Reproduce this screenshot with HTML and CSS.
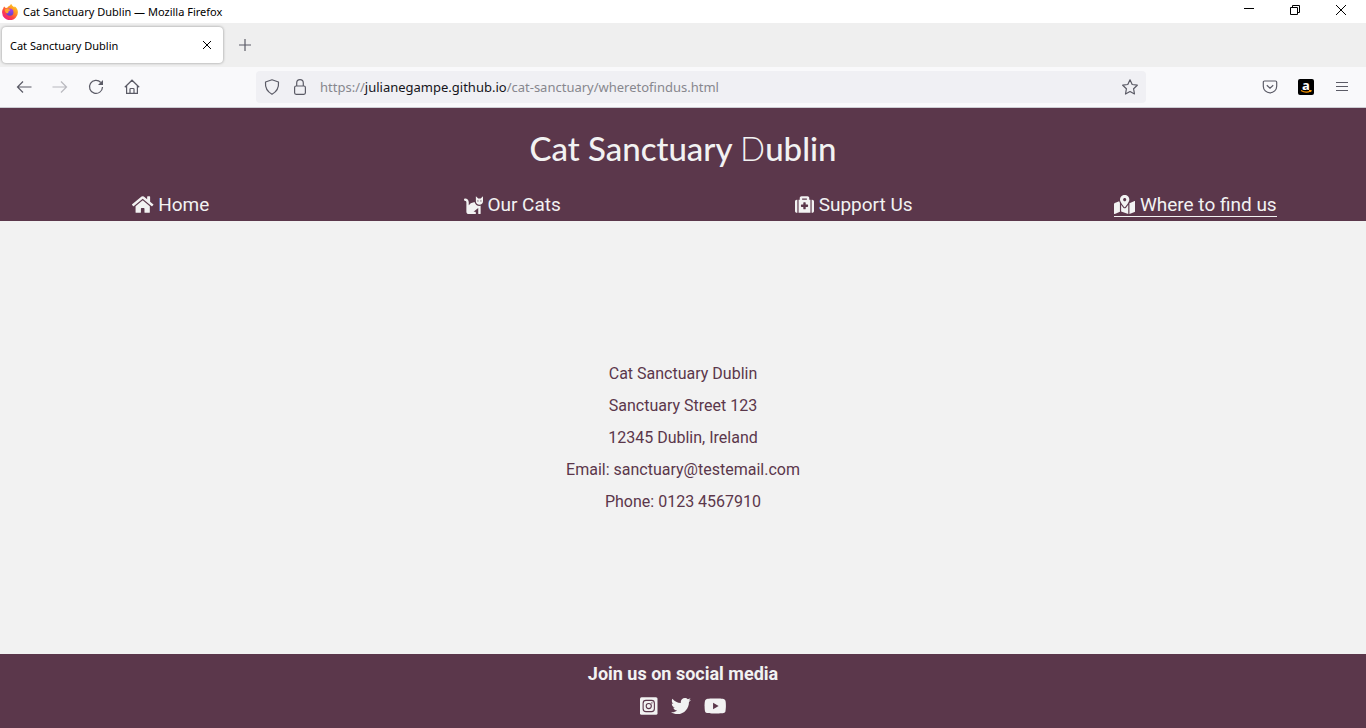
FILE: index.html
```html
<!DOCTYPE html>
<html lang="en">
<head>
<meta charset="utf-8">
<title>Cat Sanctuary Dublin</title>
<link rel="stylesheet" href="styles.css">
</head>
<body>
<div class="titlebar">
  <svg class="i16" viewBox="0 0 16 16">
    <defs>
      <linearGradient id="flame" x1="1" y1="0" x2="0.2" y2="1"><stop offset="0" stop-color="#ffe226"/><stop offset=".4" stop-color="#ff9422"/><stop offset=".7" stop-color="#ff4045"/><stop offset="1" stop-color="#e91e8c"/></linearGradient>
      <linearGradient id="globe" x1="0" y1="0" x2="0" y2="1"><stop offset="0" stop-color="#b43cf0"/><stop offset="1" stop-color="#5a46c8"/></linearGradient>
    </defs>
    <path fill="url(#flame)" d="M2.2 2.6 3.7 4l1.6-.2C6.2 2.4 7.400 1.800 8 1.600 8 1 8.700.3 9.400 0c.2 1.500 1.600 2 2.800 3.200.4-.2.5-.6.4-1 2.200 1.500 3.300 3.700 3.300 6a7.900 7.900 0 0 1-15.800.2c0-1.800.5-3.200 1.300-4.100 0-.7.300-1.300.8-1.700z"/>
    <circle cx="7.800" cy="8.200" r="3.600" fill="url(#globe)"/>
    <path fill="#ffa32b" d="M2.700 5.700c1.200-1.200 3-1.200 4.100-.5l1.500.5c-.2.900-1.300 1-1.700 1.600-.3.600.2 1.600-.9 1.900-1.600.4-2.800-1.500-3-3.500z"/>
  </svg>
  <span class="window-title">Cat Sanctuary Dublin — Mozilla Firefox</span>
  <div class="window-buttons">
    <button aria-label="Minimize"><svg class="i12" viewBox="0 0 12 12"><path d="M1 4.500h10"/></svg></button>
    <button aria-label="Restore"><svg class="i12" viewBox="0 0 12 12"><path d="M1.500 3.500h7v7h-7zM3.500 3.500v-2h7v7h-2"/></svg></button>
    <button aria-label="Close"><svg class="i12" viewBox="0 0 12 12"><path d="m1 1 10 10M11 1 1 11"/></svg></button>
  </div>
</div>
<div class="tabs">
  <div class="tab"><span>Cat Sanctuary Dublin</span><button aria-label="Close tab"><svg class="i12" viewBox="0 0 12 12"><path d="m2 2 8 8M10 2l-8 8"/></svg></button></div>
  <button class="new-tab" aria-label="New tab"><svg class="i12" viewBox="0 0 12 12"><path d="M6 0v12M0 6h12"/></svg></button>
</div>
<div class="toolbar">
  <div class="tools">
    <button aria-label="Back"><svg class="i16" viewBox="0 0 16 16"><path d="M15.500 8H1.500M7 2.500 1.500 8 7 13.500"/></svg></button>
    <button aria-label="Forward" class="dim"><svg class="i16" viewBox="0 0 16 16"><path d="M.5 8h14M9 2.500 14.500 8 9 13.500"/></svg></button>
    <button aria-label="Reload"><svg class="i16" viewBox="0 0 16 16"><path d="M12.800 3.500a6.500 6.500 0 1 0 1.700 4.500"/><path class="solid" d="M15 1v5H10z"/></svg></button>
    <button aria-label="Home page"><svg class="i16" viewBox="0 0 16 16"><path d="M.8 8.200 8 1.200l7.200 7M2.600 7v7.400h10.800V7M6 14.300v-4.100q0-.7.700-.7h2.600q.7 0 .7.700v4.100"/></svg></button>
  </div>
  <div class="urlbar">
    <svg class="i16" viewBox="0 0 16 16"><path d="M8 .8 14.500 3C15 8.500 13 12.500 8 15.300 3 12.500 1 8.500 1.500 3z" stroke-linejoin="round"/></svg>
    <svg class="i16" viewBox="0 0 16 16"><rect x="2.600" y="7" width="10.800" height="8.300" rx="1.500"/><path d="M4.700 7V4a3.300 3.300 0 0 1 6.600 0v3"/></svg>
    <a class="url" href="#">https://<b>julianegampe.github.io</b>/cat-sanctuary/wheretofindus.html</a>
    <button aria-label="Bookmark this page"><svg class="i16" viewBox="0 0 16 16"><path stroke-linejoin="round" d="m8 .8 2.200 4.700 5.100.7-3.700 3.600.9 5.200L8 12.500 3.500 15l.9-5.200L.7 6.200l5.100-.7z"/></svg></button>
  </div>
  <div class="tools extras">
    <button aria-label="Save to Pocket"><svg class="i16" viewBox="0 0 16 16"><path d="M2.500 2h11q1.200 0 1.200 1.200v4a6.700 6.700 0 0 1-13.400 0v-4Q1.300 2 2.500 2zM4.800 6.200 8 9.200l3.200-3"/></svg></button>
    <button class="amazon" aria-label="Amazon"><span>a</span><svg viewBox="0 0 16 4"><path d="M3 .5q5 3 9.500.5M11 .5h2l-.5 1.500"/></svg></button>
    <button aria-label="Menu"><svg class="i16" viewBox="0 0 16 16"><path d="M2 3.500h12M2 7.500h12M2 11.500h12"/></svg></button>
  </div>
</div>
<header class="site-header">
  <h1>Cat Sanctuary <span>D</span>ublin</h1>
  <nav>
    <a href="#"><svg viewBox="0 0 576 512"><path d="M280.370 148.260L96 300.110V464a16 16 0 0 0 16 16l112.060-.29a16 16 0 0 0 15.920-16V368a16 16 0 0 1 16-16h64a16 16 0 0 1 16 16v95.640a16 16 0 0 0 16 16.050L464 480a16 16 0 0 0 16-16V300L295.670 148.260a12.190 12.190 0 0 0-15.300 0zM571.600 251.470L488 182.560V44.050a12 12 0 0 0-12-12h-56a12 12 0 0 0-12 12v72.610L318.470 43a48 48 0 0 0-61 0L4.340 251.470a12 12 0 0 0-1.600 16.900l25.500 31A12 12 0 0 0 45.150 301l235.220-193.740a12.190 12.190 0 0 1 15.300 0L530.900 301a12 12 0 0 0 16.900-1.600l25.500-31a12 12 0 0 0-1.700-16.930z"/></svg> Home</a>
    <a href="#"><svg viewBox="0 0 512 512"><path d="M290.590 192c-20.180 0-106.820 1.980-162.590 85.950V192c0-52.940-43.060-96-96-96-17.670 0-32 14.330-32 32s14.330 32 32 32c17.640 0 32 14.360 32 32v256c0 35.300 28.700 64 64 64h176c8.840 0 16-7.160 16-16v-16c0-17.670-14.330-32-32-32h-32l128-96v144c0 8.840 7.160 16 16 16h32c8.840 0 16-7.160 16-16V289.860c-10.290 2.670-20.890 4.540-32 4.540-61.810 0-113.520-44.050-125.410-102.400zM448 96h-64l-64-64v134.400c0 53.020 42.980 96 96 96s96-42.980 96-96V32l-64 64zm-72 80c-8.840 0-16-7.160-16-16s7.160-16 16-16 16 7.160 16 16-7.160 16-16 16zm80 0c-8.840 0-16-7.160-16-16s7.160-16 16-16 16 7.160 16 16-7.160 16-16 16z"/></svg> Our Cats</a>
    <a href="#"><svg viewBox="0 0 512 512"><path d="M96 480h320V128h-32V80c0-26.510-21.490-48-48-48H176c-26.510 0-48 21.490-48 48v48H96v352zm96-384h128v32H192V96zm320 80v256c0 26.510-21.490 48-48 48h-16V128h16c26.510 0 48 21.490 48 48zM64 480H48c-26.510 0-48-21.490-48-48V176c0-26.510 21.490-48 48-48h16v352zm288-208v32c0 8.840-7.160 16-16 16h-48v48c0 8.840-7.160 16-16 16h-32c-8.840 0-16-7.160-16-16v-48h-48c-8.840 0-16-7.160-16-16v-32c0-8.840 7.160-16 16-16h48v-48c0-8.840 7.160-16 16-16h32c8.840 0 16 7.160 16 16v48h48c8.840 0 16 7.160 16 16z"/></svg> Support Us</a>
    <a href="#" class="active" aria-current="page"><svg viewBox="0 0 576 512"><path d="M288 0c-69.590 0-126 56.410-126 126 0 56.260 82.350 158.800 113.900 196.020 6.390 7.540 17.820 7.540 24.200 0C331.650 284.800 414 182.260 414 126 414 56.410 357.590 0 288 0zm0 168c-23.200 0-42-18.800-42-42s18.800-42 42-42 42 18.800 42 42-18.800 42-42 42zM20.120 215.950A32 32 0 0 0 0 245.660v250.320c0 11.320 11.430 19.060 21.940 14.860L160 448V214.920c-8.840-15.980-16.070-31.540-21.250-46.420L20.120 215.950zM288 359.670c-14.070 0-27.380-6.180-36.510-16.960-19.660-23.200-40.570-49.620-59.490-76.720v182l192 64V266c-18.920 27.090-39.820 53.520-59.490 76.720-9.130 10.770-22.440 16.950-36.510 16.950zm266.060-198.510L416 224v288l139.880-55.950A32 32 0 0 0 576 426.340V176.020c0-11.320-11.430-19.060-21.940-14.860z"/></svg> Where to find us</a>
  </nav>
</header>
<main>
  <address>
    <p>Cat Sanctuary Dublin</p>
    <p>Sanctuary Street 123</p>
    <p>12345 Dublin, Ireland</p>
    <p>Email: sanctuary@testemail.com</p>
    <p>Phone: 0123 4567910</p>
  </address>
</main>
<footer>
  <h2>Join us on social media</h2>
  <div class="social">
    <a href="#" aria-label="Instagram"><svg viewBox="0 0 448 512"><rect y="32" width="448" height="448" rx="40"/><rect class="ring" x="80" y="112" width="288" height="288" rx="72"/><circle class="ring" cx="224" cy="256" r="66"/><circle class="dot" cx="304" cy="176" r="18"/></svg></a>
    <a href="#" aria-label="Twitter"><svg viewBox="0 0 512 512"><path d="M459.370 151.716c.325 4.548.325 9.097.325 13.645 0 138.720-105.583 298.558-298.558 298.558-59.452 0-114.680-17.219-161.137-47.106 8.447.974 16.568 1.299 25.340 1.299 49.055 0 94.213-16.568 130.274-44.832-46.132-.975-84.792-31.188-98.112-72.772 6.498.974 12.995 1.624 19.818 1.624 9.421 0 18.843-1.300 27.614-3.573-48.081-9.747-84.143-51.980-84.143-102.985v-1.299c13.969 7.797 30.214 12.670 47.431 13.319-28.264-18.843-46.781-51.005-46.781-87.391 0-19.492 5.197-37.360 14.294-52.954 51.655 63.675 129.300 105.258 216.365 109.807-1.624-7.797-2.599-15.918-2.599-24.040 0-57.828 46.782-104.934 104.934-104.934 30.213 0 57.502 12.670 76.670 33.137 23.715-4.548 46.456-13.320 66.599-25.340-7.798 24.366-24.366 44.833-46.132 57.827 21.117-2.273 41.584-8.122 60.426-16.243-14.292 20.791-32.161 39.308-52.628 54.253z"/></svg></a>
    <a href="#" aria-label="YouTube"><svg viewBox="0 0 576 512"><path d="M549.655 124.083c-6.281-23.650-24.787-42.276-48.284-48.597C458.781 64 288 64 288 64S117.220 64 74.629 75.486c-23.497 6.322-42.003 24.947-48.284 48.597-11.412 42.867-11.412 132.305-11.412 132.305s0 89.438 11.412 132.305c6.281 23.650 24.787 41.500 48.284 47.821C117.220 448 288 448 288 448s170.780 0 213.371-11.486c23.497-6.321 42.003-24.171 48.284-47.821 11.412-42.867 11.412-132.305 11.412-132.305s0-89.438-11.412-132.305zm-317.510 213.508V175.185l142.739 81.205-142.739 81.201z"/></svg></a>
  </div>
</footer>
</body>
</html>
```
FILE: styles.css
```css
* { box-sizing: border-box; }
body {
  margin: 0;
  min-height: 100vh;
  display: flex;
  flex-direction: column;
  background: #f2f2f2;
  color: #5b374b;
  font-family: Roboto, sans-serif;
}
h1, h2, p { margin: 0; }
button {
  display: flex;
  align-items: center;
  justify-content: center;
  padding: 0;
  border: 0;
  background: none;
  color: inherit;
}
a { color: inherit; text-decoration: none; }

/* Browser window */
.titlebar, .tabs, .toolbar { display: flex; font-family: "Noto Sans", sans-serif; color: #000; }
.titlebar svg, .tabs svg, .toolbar svg { flex: none; fill: none; stroke: currentColor; stroke-width: 1.2; }
.titlebar > svg { stroke: none; }
.toolbar .solid { fill: currentColor; stroke: none; }
.i16 { width: 16px; height: 16px; }
.i12 { width: 12px; height: 12px; }
.titlebar { align-items: center; height: 23px; padding: 0 2px; gap: 5px; background: #fff; font-size: 11px; }
.window-buttons { display: flex; align-self: flex-start; margin-left: auto; height: 20px; }
.window-buttons button { width: 46px; }
.window-buttons svg { stroke-width: 1; }
.tabs { height: 44px; padding: 4px 2px; gap: 16px; background: #efefef; font-size: 11px; }
.tab {
  display: flex;
  align-items: center;
  justify-content: space-between;
  width: 221px;
  padding: 0 10px 0 8px;
  border-radius: 4px;
  background: #fff;
  box-shadow: 0 0 3px rgba(0, 0, 0, .4);
}
.tab svg { stroke-width: 1; }
.new-tab { color: #5b5b66; }
.toolbar { align-items: center; height: 41px; background: #f9f9fb; border-bottom: 1px solid #ccccd2; color: #5b5b66; }
.tools { display: flex; flex: 1 1 36px; padding-left: 6px; }
.tools button { width: 36px; height: 32px; }
.dim { opacity: .4; }
.urlbar {
  display: flex;
  flex: 0 1 890px;
  align-items: center;
  gap: 12px;
  height: 32px;
  padding: 0 8px;
  border-radius: 4px;
  background: #f0f0f4;
}
.url { flex: 1; color: #87878e; font-size: 13px; }
.url b { color: #15141a; font-weight: 400; }
.extras { flex-basis: 0; justify-content: flex-end; padding: 0 6px 0 0; }
.toolbar .tools:first-child { flex-basis: 42px; }
.tools .amazon {
  flex-direction: column;
  width: 16px;
  height: 16px;
  margin: 8px 10px;
  border-radius: 2px;
  background: #000;
  color: #fff;
  font: bold 13px/10px "Open Sans", sans-serif;
}
.amazon svg { width: 16px; height: 4px; color: #f90; }

/* Site */
.site-header { padding: 16px 0 4px; background: #5b374b; color: #f2f2f2; }
h1 { text-align: center; font: 500 33px/48px Lato, sans-serif; }
h1 span { font-weight: 300; }
nav { display: grid; grid-template-columns: repeat(4, 1fr); justify-items: center; margin-top: 22px; }
nav a { border-bottom: 1px solid transparent; font-size: 19px; line-height: 22px; white-space: nowrap; }
nav svg { height: 19px; vertical-align: -3px; fill: currentColor; }
.active { border-color: #f2f2f2; }
main { flex: 1; display: flex; align-items: center; justify-content: center; }
address { font-size: 16px; font-style: normal; line-height: 32px; text-align: center; }
footer { padding: 8px 0 12px; background: #5b374b; color: #f2f2f2; text-align: center; }
h2 { font-size: 18px; line-height: 24px; }
.social { display: flex; justify-content: center; gap: 13px; margin-top: 10px; }
.social a { display: flex; }
.social svg { height: 20px; fill: currentColor; }
.social .ring { fill: none; stroke: #5b374b; stroke-width: 28; }
.social .dot { fill: #5b374b; }
```
